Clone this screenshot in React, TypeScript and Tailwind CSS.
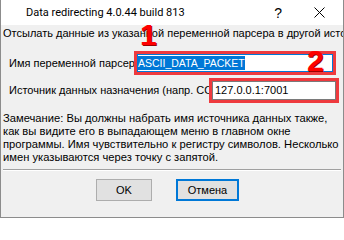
export default function App() {
  return (
    <div className="relative h-[218px] w-[344px] overflow-hidden border-x border-b border-[#8c8c8c] bg-[#f0f0f0] font-['Liberation_Sans',Arial,sans-serif] text-black">
      {/* title bar */}
      <div className="flex h-[25px] items-center bg-white">
        <span className="ml-[25px] font-['Roboto',sans-serif] text-[11px] leading-[15px]">
          Data redirecting 4.0.44 build 813
        </span>
        <span className="ml-auto text-[14px] leading-none">?</span>
        <svg className="ml-[32px] mr-[18px]" width="11" height="11" viewBox="0 0 11 11">
          <path d="M0.5 0.5 L10.5 10.5 M10.5 0.5 L0.5 10.5" stroke="#000" strokeWidth="1" />
        </svg>
      </div>

      {/* body */}
      <p className="mt-[1px] whitespace-nowrap pl-[2px] text-[11px] leading-[14px]">
        Отсылать данные из указанной переменной парсера в другой источник
      </p>

      <div className="mt-[11px] flex h-[24px] items-stretch">
        <div className="flex w-[133px] items-center overflow-hidden whitespace-nowrap pl-[8px] text-[11px]">
          Имя переменной парсера
        </div>
        <div className="w-[202px] border-[3px] border-[#ee3a3e]">
          <div className="flex h-full items-center border border-[#0078d7] bg-white text-[10.5px]">
            <span className="bg-[#0078d7] leading-[14px] text-white">ASCII_DATA_PACKET</span>
          </div>
        </div>
      </div>

      <div className="mt-[3px] flex h-[25px] items-stretch">
        <div className="flex w-[208px] items-center overflow-hidden whitespace-nowrap pl-[8px] text-[11px]">
          Источник данных назначения (напр. COM1)
        </div>
        <div className="w-[130px] border-[3px] border-[#ee3a3e]">
          <div className="flex h-full items-center border border-[#7a7a7a] bg-white pl-[2px] text-[11px]">
            127.0.0.1:7001
          </div>
        </div>
      </div>

      <p className="mt-[9px] px-[2px] text-[11.2px] leading-[13px]">
        Замечание: Вы должны набрать имя источника данных также,
        <br />
        как вы видите его в выпадающем меню в главном окне
        <br />
        программы. Имя чувствительно к регистру символов. Несколько
        <br />
        имен указываются через точку с запятой.
      </p>

      <div className="mx-[2px] mt-[5px] border-y border-t-[#a0a0a0] border-b-white" />

      <div className="mt-[8px] flex gap-[24px] pl-[95px]">
        <button className="h-[22px] w-[56px] border border-[#adadad] bg-[#e1e1e1] text-[11px] leading-none">
          OK
        </button>
        <button className="h-[22px] w-[63px] border-2 border-[#0078d7] bg-[#e1e1e1] text-[11px] leading-none">
          Отмена
        </button>
      </div>

      {/* annotation digits */}
      <span className="absolute left-[139px] top-[20px] text-[30px] font-bold leading-none text-[#ff0000] [text-shadow:1px_1px_0_#9a0000]">
        1
      </span>
      <span className="absolute left-[306px] top-[46px] text-[30px] font-bold leading-none text-[#ff0000] [text-shadow:1px_1px_0_#9a0000]">
        2
      </span>
    </div>
  );
}
